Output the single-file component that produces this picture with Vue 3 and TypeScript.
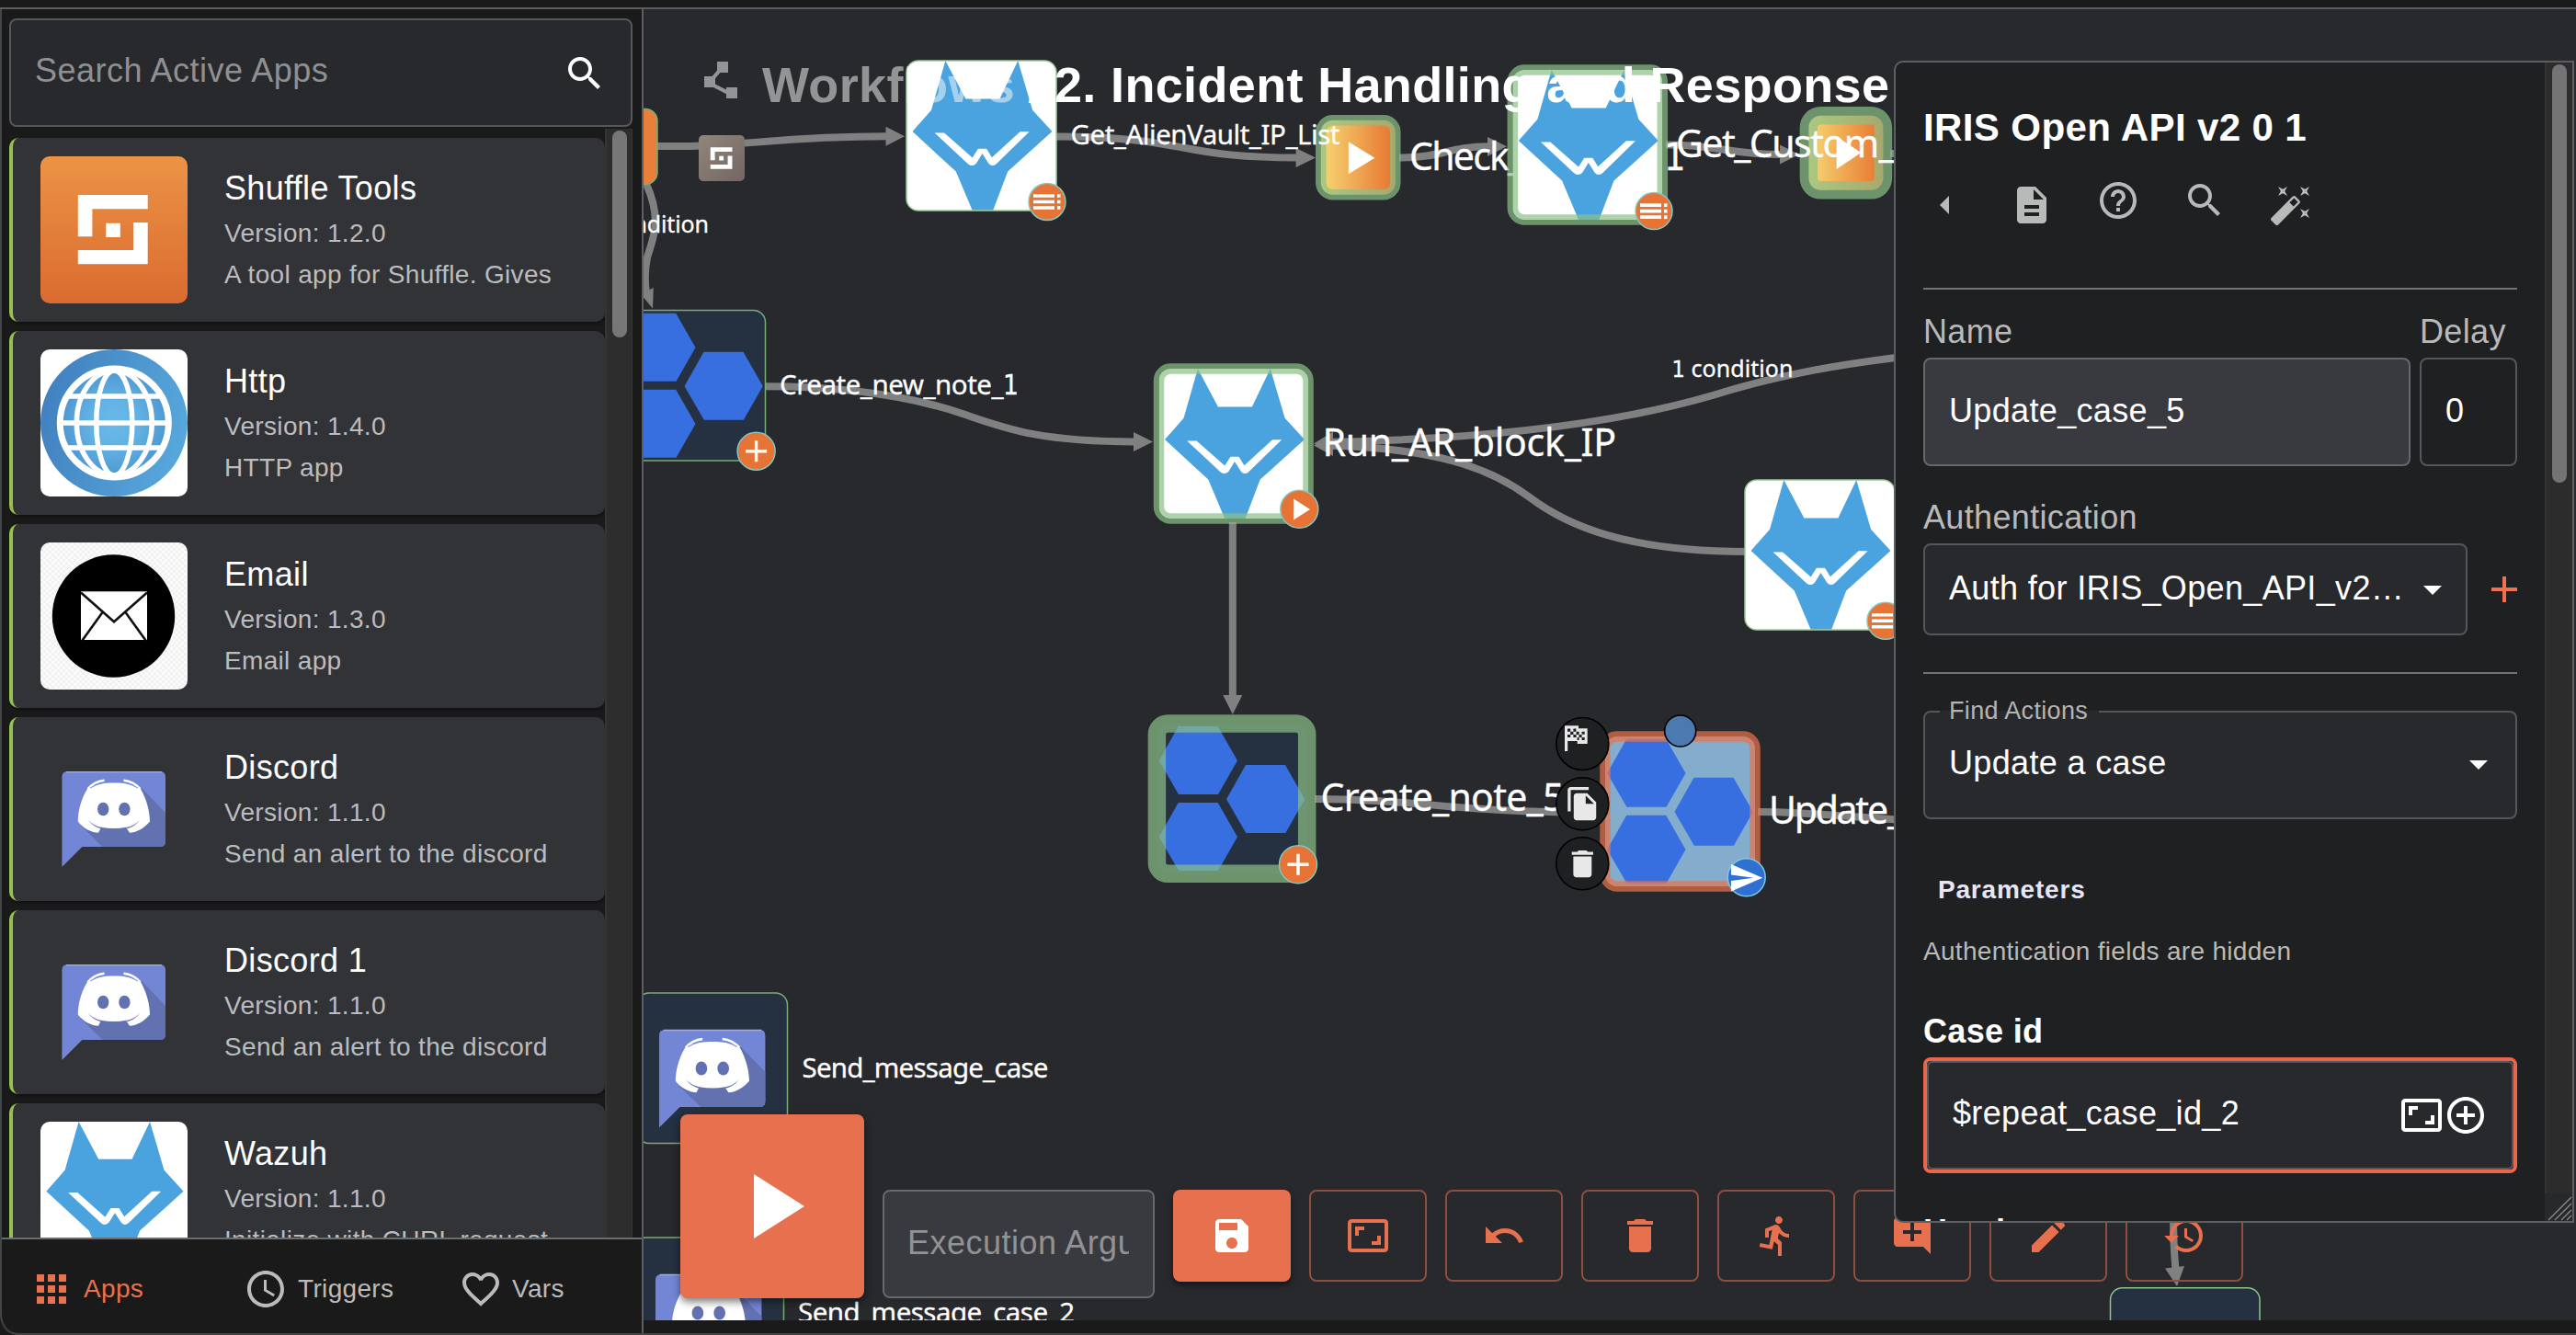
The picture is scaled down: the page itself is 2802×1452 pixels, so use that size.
<script setup lang="ts">
interface AppItem {
  name: string
  version: string
  desc: string
  logo: string
}

const apps: AppItem[] = [
  { name: 'Shuffle Tools', version: '1.2.0', desc: 'A tool app for Shuffle. Gives', logo: 'shuffle' },
  { name: 'Http', version: '1.4.0', desc: 'HTTP app', logo: 'http' },
  { name: 'Email', version: '1.3.0', desc: 'Email app', logo: 'email' },
  { name: 'Discord', version: '1.1.0', desc: 'Send an alert to the discord', logo: 'discord' },
  { name: 'Discord 1', version: '1.1.0', desc: 'Send an alert to the discord', logo: 'discord' },
  { name: 'Wazuh', version: '1.1.0', desc: 'Initialize with CURL request', logo: 'wazuh' },
]

const icons: Record<string, string> = {
  search: 'M15.5 14h-.79l-.28-.27C15.41 12.59 16 11.11 16 9.5 16 5.91 13.09 3 9.5 3S3 5.91 3 9.5 5.91 16 9.5 16c1.61 0 3.09-.59 4.23-1.57l.27.28v.79l5 4.99L20.49 19l-4.99-5zm-6 0C7.01 14 5 11.99 5 9.5S7.01 5 9.5 5 14 7.01 14 9.5 11.99 14 9.5 14z',
  apps: 'M4 8h4V4H4v4zm6 12h4v-4h-4v4zm-6 0h4v-4H4v4zm0-6h4v-4H4v4zm6 0h4v-4h-4v4zm6-10v4h4V4h-4zm-6 4h4V4h-4v4zm6 6h4v-4h-4v4zm0 6h4v-4h-4v4z',
  clock: 'M11.99 2C6.47 2 2 6.48 2 12s4.47 10 9.99 10C17.52 22 22 17.52 22 12S17.52 2 11.99 2zM12 20c-4.42 0-8-3.58-8-8s3.58-8 8-8 8 3.58 8 8-3.58 8-8 8zm.5-13H11v6l5.25 3.15.75-1.23-4.5-2.67z',
  heart: 'M16.5 3c-1.74 0-3.41.81-4.5 2.09C10.91 3.81 9.24 3 7.5 3 4.42 3 2 5.42 2 8.5c0 3.78 3.4 6.86 8.55 11.54L12 21.35l1.45-1.32C18.6 15.36 22 12.28 22 8.5 22 5.42 19.58 3 16.5 3zm-4.4 15.55-.1.1-.1-.1C7.14 14.24 4 11.39 4 8.5 4 6.5 5.5 5 7.5 5c1.54 0 3.04.99 3.57 2.36h1.87C13.46 5.99 14.96 5 16.5 5c2 0 3.5 1.5 3.5 3.5 0 2.89-3.14 5.74-7.9 10.05z',
  polyline: 'M15 16v1.26l-6-3v-3.17L11.7 8H16V2h-6v4.9L7.3 10H3v6h5l7 3.57V22h6v-6h-6z',
  play: 'M8 5v14l11-7z',
  save: 'M17 3H5c-1.11 0-2 .9-2 2v14c0 1.1.89 2 2 2h14c1.1 0 2-.9 2-2V7l-4-4zm-5 16c-1.66 0-3-1.34-3-3s1.34-3 3-3 3 1.34 3 3-1.34 3-3 3zm3-10H5V5h10v4z',
  aspect: 'M19 12h-2v3h-3v2h5v-5zM7 9h3V7H5v5h2V9zm14-6H3c-1.1 0-2 .9-2 2v14c0 1.1.9 2 2 2h18c1.1 0 2-.9 2-2V5c0-1.1-.9-2-2-2zm0 16.01H3V4.99h18v14.02z',
  undo: 'M12.5 8c-2.65 0-5.05.99-6.9 2.6L2 7v9h9l-3.62-3.62c1.39-1.16 3.16-1.88 5.12-1.88 3.54 0 6.55 2.31 7.6 5.5l2.37-.78C21.08 11.03 17.15 8 12.5 8z',
  trash: 'M6 19c0 1.1.9 2 2 2h8c1.1 0 2-.9 2-2V7H6v12zM19 4h-3.5l-1-1h-5l-1 1H5v2h14V4z',
  run: 'M13.49 5.48c1.1 0 2-.9 2-2s-.9-2-2-2-2 .9-2 2 .9 2 2 2zm-3.6 13.9 1-4.4 2.1 2v6h2v-7.5l-2.1-2 .6-3c1.3 1.5 3.3 2.5 5.5 2.5v-2c-1.9 0-3.5-1-4.3-2.4l-1-1.6c-.4-.6-1-1-1.7-1-.3 0-.5.1-.8.1l-5.2 2.2v4.7h2v-3.4l1.8-.7-1.6 8.1-4.9-1-.4 2 7 1.4z',
  comment: 'M22 4c0-1.1-.9-2-2-2H4c-1.1 0-2 .9-2 2v12c0 1.1.9 2 2 2h14l4 4V4zm-5 7h-4v4h-2v-4H7V9h4V5h2v4h4v2z',
  edit: 'M3 17.25V21h3.75L17.81 9.94l-3.75-3.75L3 17.25zM20.71 7.04c.39-.39.39-1.02 0-1.41l-2.34-2.34c-.39-.39-1.02-.39-1.41 0l-1.83 1.83 3.75 3.75 1.83-1.83z',
  history: 'M13 3c-4.97 0-9 4.03-9 9H1l3.89 3.89.07.14L9 12H6c0-3.87 3.13-7 7-7s7 3.13 7 7-3.13 7-7 7c-1.93 0-3.68-.79-4.94-2.06l-1.42 1.42C8.27 19.99 10.51 21 13 21c4.97 0 9-4.03 9-9s-4.03-9-9-9zm-1 5v5l4.28 2.54.72-1.21-3.5-2.08V8H12z',
  left: 'm14 7-5 5 5 5V7z',
  doc: 'M14 2H6c-1.1 0-1.99.9-1.99 2L4 20c0 1.1.89 2 1.99 2H18c1.1 0 2-.9 2-2V8l-6-6zm2 16H8v-2h8v2zm0-4H8v-2h8v2zm-3-5V3.5L18.5 9H13z',
  help: 'M11 18h2v-2h-2v2zm1-16C6.48 2 2 6.48 2 12s4.48 10 10 10 10-4.48 10-10S17.52 2 12 2zm0 18c-4.41 0-8-3.59-8-8s3.59-8 8-8 8 3.59 8 8-3.59 8-8 8zm0-14c-2.21 0-4 1.79-4 4h2c0-1.1.9-2 2-2s2 .9 2 2c0 2-3 1.75-3 5h2c0-2.25 3-2.5 3-5 0-2.21-1.79-4-4-4z',
  wand: 'M7.5 5.6 10 7 8.6 4.5 10 2 7.5 3.4 5 2l1.4 2.5L5 7zm12 9.8L17 14l1.4 2.5L17 19l2.5-1.4L22 19l-1.4-2.5L22 14zM22 2l-2.5 1.4L17 2l1.4 2.5L17 7l2.5-1.4L22 7l-1.4-2.5zm-7.63 5.29c-.39-.39-1.02-.39-1.41 0L1.29 18.96c-.39.39-.39 1.02 0 1.41l2.34 2.34c.39.39 1.02.39 1.41 0L16.7 11.05c.39-.39.39-1.02 0-1.41l-2.33-2.35zm-1.03 5.49-2.12-2.12 2.44-2.44 2.12 2.12-2.44 2.44z',
  down: 'm7 10 5 5 5-5z',
  add: 'M19 13h-6v6h-2v-6H5v-2h6V5h2v6h6v2z',
  addCircle: 'M13 7h-2v4H7v2h4v4h2v-4h4v-2h-4V7zm-1-5C6.48 2 2 6.48 2 12s4.48 10 10 10 10-4.48 10-10S17.52 2 12 2zm0 18c-4.41 0-8-3.59-8-8s3.59-8 8-8 8 3.59 8 8-3.59 8-8 8z',
  copy: 'M16 1H4c-1.1 0-2 .9-2 2v14h2V3h12V1zm-1 4 6 6v10c0 1.1-.9 2-2 2H7.99C6.89 23 6 22.1 6 21V7c0-1.1.89-2 1.99-2h7zm-1 7h5.5L14 6.5V12z',
  send: 'M2.01 21 23 12 2.01 3 2 10l15 2-15 2z',
}

const toolbar = ['aspect', 'undo', 'trash', 'run', 'comment', 'edit', 'history']
const actionIcons = ['left', 'doc', 'help', 'search', 'wand']
const tabs = [
  { label: 'Apps', icon: 'apps', active: true },
  { label: 'Triggers', icon: 'clock', active: false },
  { label: 'Vars', icon: 'heart', active: false },
]

const edges = [
  'M714 159H740C810 159 850 148.3 965 148.3',
  'M702 198C722 240 709 262 704 280C701 295 701 305 703 318',
  'M1149 148.6C1220 148.6 1250 154 1284 160C1320 167 1350 171.5 1412 171.5',
  'M1522 171.5C1570 171.5 1575 159.3 1620 159.3',
  'M1812 157.5C1870 157.5 1880 168 1938 168',
  'M2056 167H2070',
  'M832 420.3C930 420.3 1000 434 1047 450S1130 480.5 1235 480.5',
  'M1440 481C1600 478 1750 463 1863 430C1930 409 1990 398 2070 388',
  'M1440 484.5C1560 487 1620 508 1664 541C1705 572 1770 600 1900 600',
  'M1340.8 568V758',
  'M1430 869C1540 869 1580 883.5 1740 884',
  'M1912 883C1960 883 2010 888 2070 892',
  'M2364 1320C2364 1350 2365 1365 2366.5 1382',
]
const arrows = [
  '984,148.3 963.5,137.8 963.5,158.8',
  '710,335.5 697,320 710.8,313',
  '1431,171.5 1409.6,161 1409.6,182',
  '1639,159.3 1618,149 1618,170',
  '1957,168 1936,157.5 1936,178.5',
  '1254,480.5 1233,470 1233,491',
  '1429,482.5 1450,469.5 1450,491',
  '1429,484.5 1450,474 1450,496',
  '1340.8,777 1330.3,756 1351.3,756',
  '2368,1399 2355,1379.5 2376,1377',
]
</script>

<template>
  <div class="window">
    <svg class="defs" aria-hidden="true">
      <defs>
        <linearGradient id="gOrange" x1="0" y1="0" x2="0" y2="1">
          <stop offset="0" stop-color="#ec9345" /><stop offset="1" stop-color="#da6b30" />
        </linearGradient>
        <linearGradient id="gPlay" x1="0" y1="0" x2="1" y2="0">
          <stop offset="0" stop-color="#f6d873" /><stop offset="1" stop-color="#e7722f" />
        </linearGradient>
        <linearGradient id="gMuted" x1="0" y1="0" x2="1" y2="1">
          <stop offset="0" stop-color="#91867b" /><stop offset="1" stop-color="#736663" />
        </linearGradient>
        <radialGradient id="gHttp">
          <stop offset="0" stop-color="#68b9e8" /><stop offset=".45" stop-color="#62b1e3" /><stop offset="1" stop-color="#4a94cf" />
        </radialGradient>
        <linearGradient id="gRing" x1="0" y1=".3" x2="1" y2=".6">
          <stop offset="0" stop-color="#4180bf" /><stop offset="1" stop-color="#57a8dc" />
        </linearGradient>
        <pattern id="checks" width="6" height="6" patternUnits="userSpaceOnUse">
          <rect width="6" height="6" fill="#fbfbfb" /><path d="M0 0h3v3H0zM3 3h3v3H3z" fill="#f1f1f1" />
        </pattern>
        <symbol id="mark" viewBox="0 0 160 160">
          <path fill="#fff" d="M40.8 42h75.9v15.3H56.4v30H40.8zM101 72h15.7v45.3H40.8V102H101zM71.2 72.7h15.6V88H71.2z" />
        </symbol>
        <symbol id="shuffle" viewBox="0 0 160 160">
          <rect width="160" height="160" fill="url(#gOrange)" /><use href="#mark" width="160" height="160" />
        </symbol>
        <symbol id="http" viewBox="0 0 160 160">
          <rect width="160" height="160" fill="#fff" />
          <circle cx="80" cy="80" r="80" fill="url(#gRing)" />
          <circle cx="80.3" cy="80" r="62" fill="url(#gHttp)" />
          <g fill="none" stroke="#fff" stroke-width="5.500">
            <circle cx="80.3" cy="80" r="59" stroke-width="7" />
            <ellipse cx="80.3" cy="80" rx="19.5" ry="57" /><ellipse cx="80.3" cy="80" rx="41" ry="57" />
            <path d="M22 80h116M29 51h102M29 107h102" />
          </g>
        </symbol>
        <symbol id="email" viewBox="0 0 160 160">
          <rect width="160" height="160" fill="url(#checks)" />
          <circle cx="79.5" cy="80" r="66.7" />
          <rect x="44" y="53.3" width="72" height="52.7" fill="#fff" />
          <path d="M44 54.5 80 86.2 116 54.5M67.5 76 45.5 106.5M92.5 76 114.5 106.5" fill="none" stroke="#111" stroke-width="2.6" />
        </symbol>
        <symbol id="discord" viewBox="0 0 160 160">
          <path fill="#7386d5" d="M29.5 39H130q6 0 6 6V115q0 6-6 6H45.4L23.4 143V45q0-6 6.1-6z" />
          <path fill="#6271b0" d="M110 57 136 84V115q0 6-6 6H67.5L44 98z" />
          <path stroke="#a3aee0" stroke-width="1.4" d="M28 39.6h104" />
          <path fill="#fff" d="M51 58C58 53.500 67 51.600 80 51.600S102 53.500 109 58C115.500 69 119 83 119 93.500 113 100.500 105 105.500 97 105.700L93 99.700Q87 101 80 101T66 99.700L63 105.700C55 105.500 46 100.500 40.800 93.500 40.800 83 44 69 51 58z" />
          <path d="M51.500 58C56 53 62 49.600 69.500 48.800M108.500 58C104 53 98 49.600 90.500 48.800" fill="none" stroke="#fff" stroke-width="2.600" />
          <path d="M54 57C60 54 64 52 69 51.500M106 57C100 54 96 52 91 51.500" fill="none" stroke="#7386d5" stroke-width="1" />
          <path fill="#6271b0" d="M52 92q6 6.500 15 8l-1.500 1.200Q57 99 52 92zM108 92q-6 6.500-15 8l1.500 1.200Q103 99 108 92z" />
          <ellipse cx="68.200" cy="80" rx="6.200" ry="7.300" fill="#6271b0" /><ellipse cx="91.400" cy="80" rx="6.200" ry="7.300" fill="#6271b0" />
        </symbol>
        <symbol id="wazuh" viewBox="0 0 100 100">
          <rect width="100" height="100" fill="#fff" />
          <path fill="#4aa3df" d="M26 0 39.500 25.500H62.200L74.400 0 84.100 33 97.200 47.300 67.600 74 57.700 100H44L33 74 4 47.300 16.600 33z" />
          <path fill="#fff" d="M18.800 48.200H25.200L44 64.800 47.800 58.800H53.400L57 64.600 75.800 47.400H82L60 68.800Q57 71.300 54.800 68.500L50.600 62 46.600 68.500Q44 71.300 41 68.800z" />
        </symbol>
        <symbol id="hex" viewBox="0 0 164 164">
          <g fill="#376fe0">
            <path id="hx" d="M2.700 40.600 23.700 3.300H66.700L88 40.600 67 77.300H24z" />
            <use href="#hx" y="83" /><use href="#hx" x="73.300" y="42" />
          </g>
        </symbol>
        <g id="bList">
          <circle r="20" fill="#e57436" stroke="#86c5c0" stroke-width="1.500" />
          <path stroke="#fff" stroke-width="3.600" d="M-15-6.500H8M-15 0H8M-15 6.500H8M11-6.500h3.500M11 0h3.500M11 6.500h3.500" />
        </g>
        <g id="bPlus">
          <circle r="20.500" fill="#e57436" stroke="#86c5c0" stroke-width="1.500" />
          <path stroke="#fff" stroke-width="3.400" d="M-11.500 0h23M0-11.500v23" />
        </g>
      </defs>
    </svg>

    <div class="workspace">
      <aside class="sidebar">
        <div class="search">
          <span>Search Active Apps</span>
          <svg class="ico white" viewBox="0 0 24 24"><path :d="icons.search" /></svg>
        </div>
        <div class="list">
          <div class="cards">
            <div v-for="a in apps" :key="a.name" class="card">
              <svg class="logo"><use :href="'#' + a.logo" width="160" height="160" /></svg>
              <div class="info">
                <div class="name">{{ a.name }}</div>
                <div class="sub">Version: {{ a.version }}</div>
                <div class="sub">{{ a.desc }}</div>
              </div>
            </div>
          </div>
          <div class="track"><div class="thumb"></div></div>
        </div>
        <nav class="tabs">
          <div v-for="t in tabs" :key="t.label" class="tab" :class="[t.icon, { active: t.active }]">
            <svg class="ico" viewBox="0 0 24 24"><path :d="icons[t.icon]" /></svg>
            <span>{{ t.label }}</span>
          </div>
        </nav>
      </aside>

      <main class="canvas">
        <svg class="graph" viewBox="700 10 2102 1426" width="2102" height="1426">
          <g class="edges">
            <path v-for="e in edges" :key="e" :d="e" />
            <polygon v-for="p in arrows" :key="p" :points="p" />
          </g>

          <!-- left column -->
          <rect x="633" y="118.500" width="82" height="82" rx="13" fill="#e8803c" stroke="#7aad76" stroke-width="1.500" />
          <rect x="760" y="147" width="50" height="50" rx="5" fill="url(#gMuted)" />
          <use href="#mark" x="760" y="147" width="50" height="50" />
          <text x="641" y="252.500" textLength="130" class="s"><tspan class="one">1</tspan> condition</text>
          <rect x="668.500" y="337.500" width="164" height="163.500" rx="13" fill="#253040" stroke="#7aad76" stroke-width="1.500" />
          <use href="#hex" x="668.500" y="337.500" width="164" height="164" />
          <use href="#bPlus" x="822.600" y="490.700" />
          <text x="848" y="429" textLength="260" class="m">Create_new_note_<tspan class="one">1</tspan></text>
          <g stroke="#7aad76" stroke-width="1.500" fill="#253040">
            <rect x="693" y="1080" width="163.500" height="163.500" rx="13" />
            <rect x="689" y="1346" width="163.500" height="163.500" rx="13" />
          </g>
          <use href="#discord" x="693" y="1080" width="164" height="164" />
          <use href="#discord" x="689" y="1346" width="164" height="164" />
          <text x="872.500" y="1171.500" textLength="268" class="m">Send_message_case</text>
          <text x="868" y="1437.500" textLength="301" class="m">Send_message_case_2</text>

          <!-- top row -->
          <clipPath id="c1"><rect x="986" y="66" width="163" height="163" rx="13" /></clipPath>
          <g clip-path="url(#c1)"><use href="#wazuh" x="986" y="66" width="163" height="163" /></g>
          <rect x="986" y="66" width="163" height="163" rx="13" fill="none" stroke="#9ccb98" stroke-width="1.500" />
          <use href="#bList" x="1139" y="219.500" />

          <text x="1533" y="184.800" textLength="109" class="l">Check</text>
          <text x="1640" y="184.800" class="l">_</text>
          <text x="1810" y="184.800" class="l"><tspan class="one">1</tspan></text>

          <rect x="1436.800" y="130.800" width="81" height="81" rx="13" fill="url(#gPlay)" />
          <rect x="1436.800" y="130.800" width="81" height="81" rx="13" class="halo" />
          <path d="M1466.800 154.300v35L1495.400 171.700z" fill="#fff" />
          <text x="1164.500" y="157.300" textLength="293" class="m">Get_AlienVault_IP_List</text>

          <clipPath id="c2"><rect x="1645.300" y="76" width="163" height="163" rx="13" /></clipPath>
          <g clip-path="url(#c2)"><use href="#wazuh" x="1645.300" y="76" width="163" height="163" /></g>
          <rect x="1645.300" y="76" width="163" height="163" rx="13" class="halo" />
          <use href="#bList" x="1799" y="229.600" />

          <rect x="1967.400" y="125.800" width="81" height="81" rx="13" fill="url(#gPlay)" />
          <rect x="1967.400" y="125.800" width="81" height="81" rx="13" class="halo wide" />
          <path d="M1997.600 148.600v35.400L2024.400 166z" fill="#fff" />
          <text x="1823" y="171" textLength="221" class="l">Get_Custom</text>
          <text x="2043.500" y="171" class="l">_</text>

          <!-- middle -->
          <text x="1818.500" y="409.500" textLength="132" class="s"><tspan class="one">1</tspan> condition</text>
          <clipPath id="c3"><rect x="1260.500" y="401" width="162.500" height="163" rx="13" /></clipPath>
          <g clip-path="url(#c3)"><use href="#wazuh" x="1260.500" y="401" width="163" height="163" /></g>
          <rect x="1260.500" y="401" width="162.500" height="163" rx="13" class="halo" />
          <circle cx="1413.300" cy="553.700" r="20.500" fill="#e57436" stroke="#86c5c0" stroke-width="1.500" />
          <path d="M1407 542.500v23L1425 554z" fill="#fff" />
          <text x="1438.500" y="495.500" textLength="319.500" class="l">Run_AR_block_IP</text>

          <clipPath id="c4"><rect x="1898" y="522" width="163" height="163" rx="13" /></clipPath>
          <g clip-path="url(#c4)"><use href="#wazuh" x="1898" y="522" width="163" height="163" /></g>
          <rect x="1898" y="522" width="163" height="163" rx="13" fill="none" stroke="#9ccb98" stroke-width="1.500" />
          <use href="#bList" x="2051" y="675.300" />

          <rect x="1258.400" y="787" width="163.500" height="163.500" rx="13" fill="#253040" />
          <use href="#hex" x="1258" y="786.700" width="164" height="164" />
          <rect x="1258.400" y="787" width="163.300" height="163.300" rx="12" class="halo wide" />
          <use href="#bPlus" x="1412" y="940.300" />
          <text x="1436.500" y="882.200" textLength="265" class="l">Create_note_5</text>

          <!-- selected node -->
          <rect x="1746" y="801" width="163" height="163" rx="13" fill="#83accd" />
          <use href="#hex" x="1745.500" y="800.500" width="164" height="164" />
          <rect x="1746" y="801" width="163" height="163" rx="13" class="halo sel" />
          <circle cx="1827.700" cy="795" r="17" fill="#4a7ab0" stroke="#000" stroke-width="1.600" />
          <circle cx="1899.700" cy="954.300" r="20.500" fill="#2f70d3" stroke="#7fcadb" stroke-width="1.500" />
          <path :d="icons.send" fill="#fff" transform="translate(1879.700 935.200) scale(1.630)" />
          <g fill="#1f2022" stroke="#000" stroke-width="1.600">
            <circle cx="1721.300" cy="809" r="28.500" /><circle cx="1721.300" cy="874.300" r="28.500" /><circle cx="1721.300" cy="939.300" r="28.500" />
          </g>
          <g fill="#e8e8e8">
            <path d="M1702 789.300h15v3h9.700v16.700h-11v-3h-10.500v11h-3.200z" />
            <path :d="icons.copy" transform="translate(1702 854.400) scale(1.630 1.650)" />
            <path :d="icons.trash" transform="translate(1701.400 920) scale(1.660 1.630)" />
          </g>
          <path fill="#1f2022" d="M1705 792.600h3.200v3.100h-3.200zM1711.400 792.600h3v3.100h-3zM1708.200 795.700h3.200v3.200h-3.200zM1705 798.900h3.200v3.100h-3.200zM1711.400 798.900h3.200v3.100h-3.200zM1714.600 795.700h3v3.200h-3zM1720.600 795.700h3.100v3.100h-3.100zM1717.500 798.900h3.100v3.100h-3.100zM1720.600 802h3.100v3.100h-3.100zM1715.600 802h2v3.100h-2z" />
          <text x="1924" y="895.800" textLength="130" class="l">Update</text>
          <text x="2053" y="895.800" class="l">_</text>

          <rect x="2295.500" y="1400.700" width="162.500" height="163" rx="13" fill="#253040" stroke="#8bc38b" stroke-width="1.500" />
        </svg>

        <header class="crumbs">
          <svg class="ico" viewBox="0 0 24 24"><path :d="icons.polyline" /></svg>
          <span class="root">Workflows</span><span class="slash">/</span><span>2. Incident Handling and Response</span>
        </header>

        <div class="toolbar">
          <button class="exec"><svg viewBox="0 0 24 24"><path :d="icons.play" /></svg></button>
          <div class="arg"><span>Execution Argument</span></div>
          <div class="buttons">
            <button class="btn filled"><svg class="ico" viewBox="0 0 24 24"><path :d="icons.save" /></svg></button>
            <button v-for="b in toolbar" :key="b" class="btn"><svg class="ico" viewBox="0 0 24 24"><path :d="icons[b]" /></svg></button>
          </div>
        </div>

        <section class="panel">
          <div class="content">
            <h2>IRIS Open API v2 0 1</h2>
            <div class="actions">
              <svg v-for="i in actionIcons" :key="i" class="ico" :class="'act-' + i" viewBox="0 0 24 24"><path :d="icons[i]" /></svg>
            </div>
            <div class="rule"></div>
            <div class="pair">
              <div class="col grow"><div class="label">Name</div><div class="field lit">Update_case_5</div></div>
              <div class="col delay"><div class="label">Delay</div><div class="field bare">0</div></div>
            </div>
            <div class="label auth">Authentication</div>
            <div class="authrow">
              <div class="field select"><span>Auth for IRIS_Open_API_v2…</span><svg class="ico" viewBox="0 0 24 24"><path :d="icons.down" /></svg></div>
              <svg class="ico plus" viewBox="0 0 24 24"><path :d="icons.add" /></svg>
            </div>
            <div class="rule second"></div>
            <div class="field find">
              <span class="legend">Find Actions</span>
              <span>Update a case</span><svg class="ico" viewBox="0 0 24 24"><path :d="icons.down" /></svg>
            </div>
            <div class="params">Parameters</div>
            <div class="note">Authentication fields are hidden</div>
            <div class="strong">Case id</div>
            <div class="focus">
              <div class="inner">
                <span>$repeat_case_id_2</span>
                <svg class="ico" viewBox="0 0 24 24"><path :d="icons.aspect" /></svg>
                <svg class="ico" viewBox="0 0 24 24"><path :d="icons.addCircle" /></svg>
              </div>
            </div>
            <div class="strong next">Headers</div>
          </div>
          <div class="side">
            <div class="ptrack"><div class="pthumb"></div></div>
            <svg class="grip" viewBox="0 0 30 30"><path d="M4 29 29 4M11 29 29 11M18 29 29 18M24 29 29 24" /></svg>
          </div>
        </section>
      </main>
    </div>
  </div>
</template>

<style>
body { margin: 0; background: #1a1a1a; }
</style>

<style scoped>
* { box-sizing: border-box; }
.window {
  width: 2802px; height: 1452px; padding-top: 8px; overflow: hidden; background: #1a1a1a;
  border-bottom: 2px solid #444; border-bottom-left-radius: 20px;
  font-family: "Liberation Sans", Arial, sans-serif; font-size: 36px; letter-spacing: .34px; color: #fff; white-space: nowrap;
}
.defs { position: absolute; width: 0; height: 0; }
.ico { width: 48px; height: 48px; flex: none; fill: currentColor; display: block; }
.white { color: #fff; }
.workspace { display: flex; height: 1442px; border-top: 2px solid #5b5e61; }

.sidebar { width: 700px; flex: none; display: flex; flex-direction: column; border-left: 2px solid #444749; border-right: 2px solid #5d6062; padding-top: 10px; border-bottom-left-radius: 20px; }
.search { width: 678px; height: 118px; margin-left: 8px; flex: none; border: 2px solid #55575b; border-radius: 8px; background: #27292d; display: flex; align-items: center; justify-content: space-between; padding: 0 26px 5px; color: #8f9091; letter-spacing: .5px; }
.search .ico { margin: 6px 0 0; }
.list { height: 1206px; margin: 2px 0 0 8px; display: flex; overflow: hidden; flex: none; }
.cards { width: 648px; padding-top: 10px; display: flex; flex-direction: column; gap: 10px; flex: none; }
.card { height: 200px; flex: none; display: flex; gap: 40px; padding-left: 30px; align-items: center; background: #323337; border-left: 4px solid #94c150; border-radius: 10px; box-shadow: 0 2px 3px #111; }
.logo { width: 160px; height: 160px; border-radius: 10px; overflow: hidden; display: block; }
.info { display: flex; flex-direction: column; height: 143px; align-self: flex-start; margin-top: 29px; }
.name { line-height: 52px; }
.sub { font-size: 28px; line-height: 45px; letter-spacing: .33px; color: #bbbcbd; }
.track { width: 30px; background: #2d2d2d; border-left: 2px solid #353535; border-right: 1px solid #353535; padding: 2px 0 0 6px; }
.thumb { width: 16px; height: 225px; border-radius: 8px; background: #777; }
.tabs { height: 104px; border-top: 2px solid #6a6e70; flex: none; display: flex; align-items: center; font-size: 28px; color: #bbb; padding: 6px 0 0 30px; }
.tab { display: flex; align-items: center; }
.tab span { line-height: 40px; }
.tab.apps { width: 233px; color: #e8724f; }
.tab.apps span { margin-left: 11px; }
.tab.clock { width: 234px; }
.tab.clock span { margin-left: 11px; }
.tab.heart span { margin-left: 10px; }

.canvas { position: relative; width: 2102px; height: 1426px; background: #27292d; overflow: hidden; }
.graph { display: block; font-family: "Noto Sans", "DejaVu Sans Condensed", sans-serif; fill: #fff; letter-spacing: 0; }
.graph text { white-space: pre; stroke: #fff; stroke-width: .3; }
.graph .one { font-family: "DejaVu Sans Condensed", "DejaVu Sans", sans-serif; font-stretch: condensed; }
.graph .l { font-size: 41px; }
.graph .m { font-size: 29.500px; }
.graph .s { font-size: 25px; }
.edges path { fill: none; stroke: #808080; stroke-width: 8; }
.edges polygon { fill: #808080; }
.halo { fill: none; stroke: rgba(140, 193, 136, .7); stroke-width: 11.500; }
.halo.wide { stroke-width: 19.500; }
.halo.sel { stroke: rgba(235, 115, 75, .7); }

.crumbs { position: absolute; left: 60px; top: 50px; display: flex; align-items: center; height: 64px; font-size: 54px; font-weight: bold; }
.crumbs .ico { margin: 0 21px 10px 0; color: rgba(255, 255, 255, .5); }
.root { width: 276px; color: rgba(255, 255, 255, .5); }
.slash { width: 42px; text-align: center; }

.toolbar { position: absolute; left: 40px; top: 1202px; height: 200px; display: flex; gap: 20px; align-items: flex-end; }
button { border: 0; margin: 0; padding: 0; display: flex; align-items: center; justify-content: center; border-radius: 8px; color: #e7704f; background: none; flex: none; }
.exec { width: 200px; height: 200px; background: #e7704f; box-shadow: 0 4px 8px rgba(0, 0, 0, .5); }
.exec svg { width: 120px; height: 120px; fill: #fff; }
.arg { width: 296px; height: 118px; background: #383a3f; border: 2px solid #66686b; border-radius: 8px; padding: 0 26px 0 25px; display: flex; align-items: center; color: #919294; letter-spacing: .5px; }
.arg span { overflow: hidden; line-height: 44px; margin-bottom: 3px; }
.buttons { align-self: flex-start; padding-top: 82px; display: flex; gap: 20px; }
.btn { width: 128px; height: 100px; border: 2px solid #8d4f40; }
.btn.filled { background: #e7704f; border: 0; color: #fff; box-shadow: 0 4px 6px rgba(0, 0, 0, .45); }

.panel { position: absolute; left: 1360px; top: 56px; width: 740px; height: 1264px; background: #1f2022; border: 2px solid #5d6062; border-radius: 10px 0 0 10px; display: flex; overflow: hidden; }
.content { width: 706px; flex: none; padding: 46px 30px 0; display: flex; flex-direction: column; }
.content > * { flex: none; }
h2 { margin: 0; font-size: 42.120px; line-height: 50px; }
.actions { display: flex; gap: 46px; align-items: flex-end; height: 53px; margin-top: 30px; color: #b8b9b9; }
.act-help, .act-search { align-self: flex-start; }
.rule { height: 2px; background: #737476; margin-top: 66px; }
.rule.second { margin-top: 40px; }
.pair { display: flex; gap: 10px; margin-top: 25px; }
.col { display: flex; flex-direction: column; }
.grow { width: 530px; }
.delay { width: 106px; }
.label { line-height: 41px; color: #b9b9b9; margin-bottom: 8px; }
.field { height: 118px; border: 2px solid #55575b; border-radius: 8px; padding: 0 26px 3px; display: flex; align-items: center; background: #28292d; }
.field.lit { background: #383a3f; border-color: #66686b; }
.field.bare { background: #1f2022; }
.auth { margin-top: 35px; }
.authrow { display: flex; align-items: center; justify-content: space-between; }
.select { width: 592px; height: 100px; justify-content: space-between; padding-right: 12px; }
.authrow .select .ico { margin-top: 3px; }
.plus { width: 48px; height: 48px; color: #f0714f; margin-right: -10px; }
.find { margin-top: 40px; justify-content: space-between; padding-right: 16px; padding-bottom: 5px; position: relative; }
.find .ico { margin-top: 3px; }
.legend { position: absolute; left: 16px; top: -21px; height: 42px; line-height: 39px; padding: 0 12px 0 10px; font-size: 27px; color: #b4b4b4; background: linear-gradient(#1f2022 19px, #28292d 19px); }
.params { margin: 57px 0 0 16px; font-size: 28px; line-height: 40px; font-weight: bold; letter-spacing: .8px; color: #e8e6f5; }
.note { margin-top: 27px; font-size: 28px; line-height: 40px; letter-spacing: .3px; color: #b9b9b9; }
.strong { margin-top: 46px; font-weight: bold; line-height: 41px; }
.strong.next { margin-top: 43px; }
.focus { margin-top: 8px; height: 126px; border: 4px solid #e9664a; border-radius: 8px; background: #28292d; }
.inner { height: 118px; border: 2px solid #55575b; border-radius: 6px; display: flex; align-items: center; padding: 0 26px; }
.inner span { flex: 1; margin-bottom: 5px; }
.side { width: 30px; display: flex; flex-direction: column; }
.ptrack { height: 1230px; background: #2c2c2c; border-left: 2px solid #323334; padding: 2px 0 0 6px; }
.pthumb { width: 16px; height: 455px; border-radius: 8px; background: #747474; }
.grip { width: 30px; height: 30px; background: #27292c; fill: none; stroke: #8a8a8a; stroke-width: 1.300; }
</style>
